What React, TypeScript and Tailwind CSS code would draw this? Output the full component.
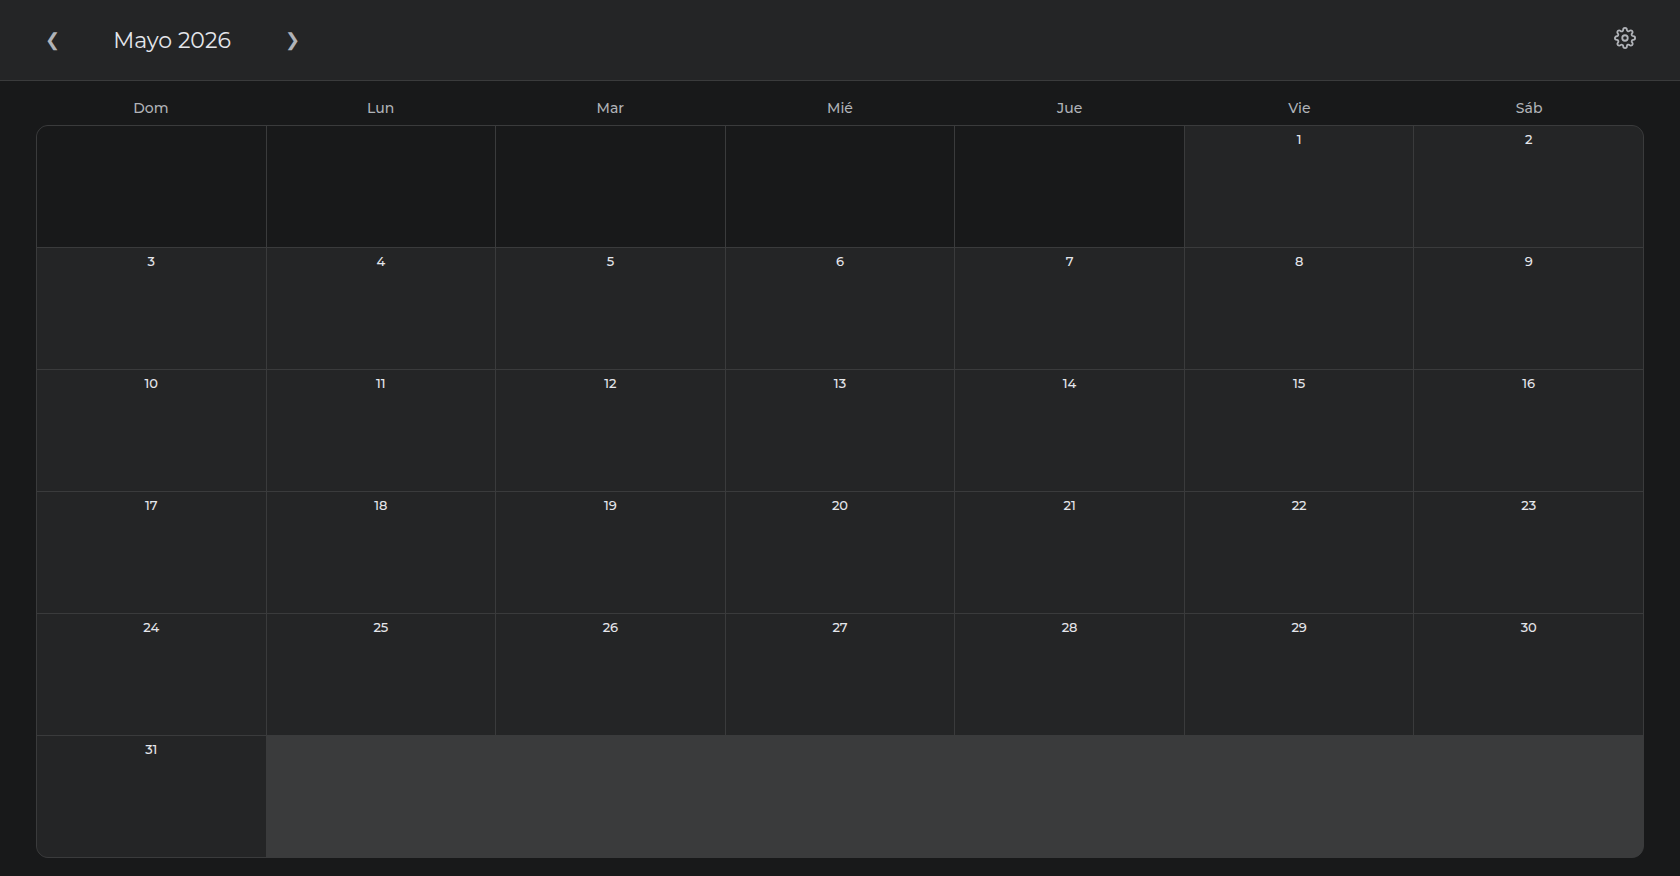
import { FiSettings } from 'react-icons/fi'

const weekdays = ['Dom', 'Lun', 'Mar', 'Mié', 'Jue', 'Vie', 'Sáb']

const FIRST_WEEKDAY = 5
const DAYS_IN_MONTH = 31

interface DayCellProps {
  day: number;
}

function DayCell({ day }: DayCellProps) {
  return (
    <div className="bg-[#242526] pt-1 text-center text-[13px] leading-[18px] font-medium text-[#e4e6eb]">
      {day}
    </div>
  )
}

function Header() {
  return (
    <header className="flex h-[81px] items-center justify-between border-b border-[#3a3b3c] bg-[#242526] px-9">
      <div className="flex items-center">
        <button type="button" aria-label="Mes anterior" className="w-8 text-lg text-[#b0b3b8]">
          ❮
        </button>
        <h1 className="w-52 text-center text-[22px] text-[#e4e6eb]">Mayo 2026</h1>
        <button type="button" aria-label="Mes siguiente" className="w-8 text-lg text-[#b0b3b8]">
          ❯
        </button>
      </div>
      <button type="button" aria-label="Configuración" className="mb-1 flex w-[38px] justify-center text-[#b0b3b8]">
        <FiSettings size={22} />
      </button>
    </header>
  )
}

export default function App() {
  const emptyCells = Array.from({ length: FIRST_WEEKDAY }, (_, i) => i)
  const days = Array.from({ length: DAYS_IN_MONTH }, (_, i) => i + 1)

  return (
    <div className="flex min-h-screen flex-col bg-[#18191a] font-['Montserrat','Inter',sans-serif]">
      <Header />

      <main className="flex flex-1 flex-col px-9 pt-[17px] pb-[18px]">
        <div className="grid grid-cols-7 pb-[7px] text-center text-sm font-medium text-[#b0b3b8]">
          {weekdays.map((name) => (
            <div key={name}>{name}</div>
          ))}
        </div>

        <div className="grid flex-1 auto-rows-fr grid-cols-7 gap-px overflow-hidden rounded-xl border border-[#3a3b3c] bg-[#3a3b3c]">
          {emptyCells.map((i) => (
            <div key={`empty-${i}`} className="bg-[#18191a]" />
          ))}
          {days.map((day) => (
            <DayCell key={day} day={day} />
          ))}
        </div>
      </main>
    </div>
  )
}
